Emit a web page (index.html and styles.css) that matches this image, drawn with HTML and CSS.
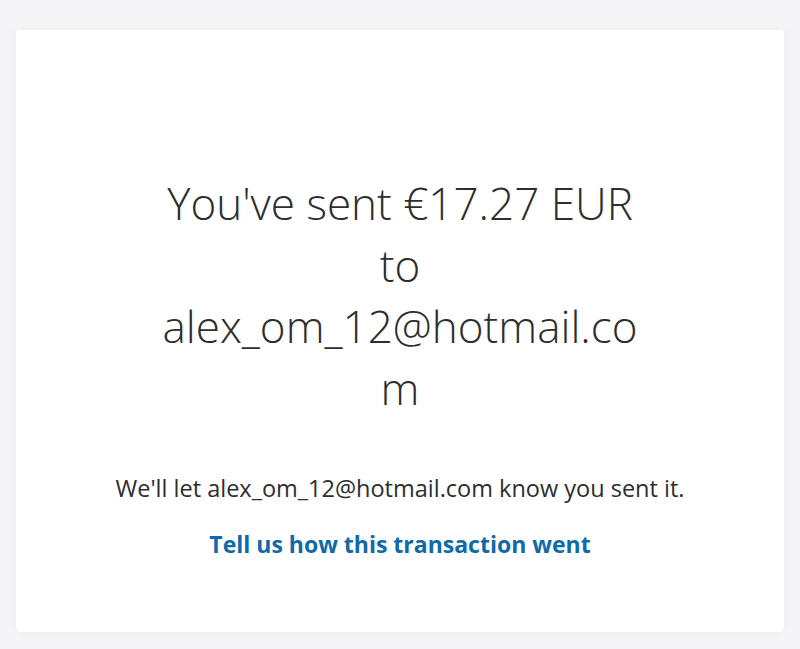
FILE: index.html
```html
<!DOCTYPE html>
<html lang="en">
<head>
    <meta charset="UTF-8">
    <meta name="viewport" content="width=device-width, initial-scale=1.0">
    <title>Payment sent</title>
    <link rel="stylesheet" href="styles.css">
</head>
<body>
    <div class="page">
        <div class="done-card">
            <h1 class="done-title">You've sent €17.27 EUR to alex_om_12@hotmail.com</h1>
            <p class="done-note">We'll let alex_om_12@hotmail.com know you sent it.</p>
            <a class="done-link" href="#">Tell us how this transaction went</a>
        </div>
    </div>
</body>
</html>
```

FILE: styles.css
```css
body {
    margin: 0;
    padding: 0;
    background-color: #f5f5f7;
    font-family: "Open Sans", "Liberation Sans", sans-serif;
    color: #2c2e2f;
}
.page {
    padding: 30px 16px 17px;
}
.done-card {
    height: 602px;
    box-sizing: border-box;
    background-color: #ffffff;
    border-radius: 4px;
    box-shadow: 0 0 12px rgba(0,0,0,0.04);
    padding-top: 143px;
    text-align: center;
}
.done-title {
    width: 496px;
    margin: 0 auto;
    font-size: 44px;
    font-weight: 300;
    line-height: 61.5px;
    overflow-wrap: anywhere;
}
.done-note {
    margin: 54px 0 0;
    font-size: 23.5px;
    line-height: 30px;
}
.done-link {
    display: inline-block;
    margin-top: 26px;
    font-size: 23px;
    font-weight: bold;
    line-height: 30px;
    color: #0e6aa8;
    text-decoration: none;
}
```
